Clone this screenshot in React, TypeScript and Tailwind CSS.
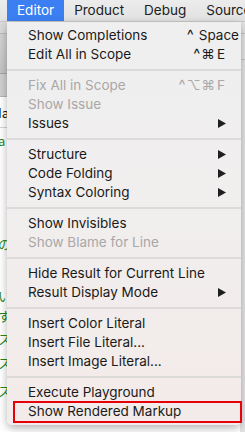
import React from 'react';

type Entry =
  | { kind: 'sep' }
  | { kind: 'item'; label: string; disabled?: boolean; sub?: boolean; keys?: React.ReactNode; pr?: string };

const FONT = { fontFamily: 'Inter, "Liberation Sans", "DejaVu Sans", sans-serif' };

const MENU: Entry[] = [
  {
    kind: 'item',
    label: 'Show Completions',
    pr: 'pr-[2px]',
    keys: (
      <>
        <span className="text-[15px]">^</span>
        <span className="ml-[5px]">Space</span>
      </>
    ),
  },
  {
    kind: 'item',
    label: 'Edit All in Scope',
    pr: 'pr-[16px]',
    keys: (
      <>
        <span className="text-[15px]">^</span>
        <span className="ml-[1px]">⌘</span>
        <span className="ml-[2px]">E</span>
      </>
    ),
  },
  { kind: 'sep' },
  {
    kind: 'item',
    label: 'Fix All in Scope',
    disabled: true,
    pr: 'pr-[16px]',
    keys: (
      <>
        <span className="text-[15px]">^</span>
        <span className="ml-[1px]">⌥</span>
        <span className="ml-[1px]">⌘</span>
        <span className="ml-[2px]">F</span>
      </>
    ),
  },
  { kind: 'item', label: 'Show Issue', disabled: true },
  { kind: 'item', label: 'Issues', sub: true },
  { kind: 'sep' },
  { kind: 'item', label: 'Structure', sub: true },
  { kind: 'item', label: 'Code Folding', sub: true },
  { kind: 'item', label: 'Syntax Coloring', sub: true },
  { kind: 'sep' },
  { kind: 'item', label: 'Show Invisibles' },
  { kind: 'item', label: 'Show Blame for Line', disabled: true },
  { kind: 'sep' },
  { kind: 'item', label: 'Hide Result for Current Line' },
  { kind: 'item', label: 'Result Display Mode', sub: true },
  { kind: 'sep' },
  { kind: 'item', label: 'Insert Color Literal' },
  { kind: 'item', label: 'Insert File Literal...' },
  { kind: 'item', label: 'Insert Image Literal...' },
  { kind: 'sep' },
  { kind: 'item', label: 'Execute Playground' },
  { kind: 'item', label: 'Show Rendered Markup' },
];

// code fragments peeking out to the left of the menu
const CODE_LINES: { h: string; text: string; color: string }[] = [
  { h: 'h-[31px]', text: 'Ia', color: 'text-[#111]' },
  { h: 'h-[24px]', text: 'a', color: 'text-[#1f8a1f]' },
  { h: 'h-[80px]', text: '', color: '' },
  { h: 'h-[22px]', text: 'の', color: 'text-[#1f8a1f]' },
  { h: 'h-[31px]', text: '', color: '' },
  { h: 'h-[20px]', text: 'い', color: 'text-[#1f8a1f]' },
  { h: 'h-[20px]', text: 'す', color: 'text-[#1f8a1f]' },
  { h: 'h-[2px]', text: '', color: '' },
  { h: 'h-[22px]', text: 'ス', color: 'text-[#1f8a1f]' },
  { h: 'h-[2px]', text: '', color: '' },
  { h: 'h-[22px]', text: 'ス', color: 'text-[#1f8a1f]' },
  { h: 'h-[6px]', text: '', color: '' },
  { h: 'h-[22px]', text: 'ス', color: 'text-[#1f8a1f]' },
];

function SubArrow() {
  return (
    <svg width="8" height="9" viewBox="0 0 8 9" className="block">
      <polygon points="0,0 8,4.5 0,9" fill="#1f1f1f" />
    </svg>
  );
}

export default function App() {
  return (
    <div className="relative h-[432px] w-[245px] overflow-hidden bg-white" style={FONT}>
      {/* menu bar */}
      <div className="flex h-[22px] items-stretch border-b border-[#c9c9c9] bg-gradient-to-b from-[#ececec] to-[#e1e1e1] pl-[7px] text-[13.5px] text-[#202020]">
        <div className="flex items-center bg-[#3b7ff2] px-[10px] text-white">Editor</div>
        <div className="flex items-center px-[10px]">Product</div>
        <div className="flex items-center px-[10px]">Debug</div>
        <div className="flex items-center whitespace-nowrap px-[10px]">Source</div>
      </div>

      {/* window behind */}
      <div className="flex h-[410px]">
        <div className="flex flex-1 flex-col">
          <div className="h-[12px] border-b border-[#b9b9b9] bg-[#dadada]" />
          <div className="h-[40px] border-b border-[#a8a8a8] bg-gradient-to-b from-[#d2d2d2] to-[#c3c3c3]" />
          <div className="h-[23px] border-b border-[#b4b4b4] bg-[#cfcfcf]" />
          <div className="flex flex-col bg-white text-[13px] leading-none">
            {CODE_LINES.map((l, i) => (
              <div
                key={i}
                className={`${l.h} flex items-center ${i === 0 ? 'border-b border-[#d5d5d5]' : ''}`}
                style={{ fontFamily: '"Noto Sans CJK JP", "DejaVu Sans", sans-serif' }}
              >
                <span className={`-ml-[2px] ${l.color}`}>{l.text}</span>
              </div>
            ))}
          </div>
        </div>
        <div className="flex w-[5px] flex-col bg-[#e4e4e4]">
          <div className="h-[12px] border-b border-[#c4c4c4]" />
          <div className="h-[26px] border-b border-[#c4c4c4]" />
        </div>
      </div>

      {/* dropdown menu */}
      <div className="absolute left-[7px] top-[22px] h-[403px] w-[234px] rounded-b-[5px] bg-gradient-to-b from-[#efefef] via-[#f1eeee] to-[#f3ebe9] pt-[4px] text-[13.5px] shadow-[0_3px_8px_rgba(0,0,0,0.3)]">
        {MENU.map((e, i) =>
          e.kind === 'sep' ? (
            <div key={i} className="flex h-[12px] items-center">
              <div className="h-[2px] w-full bg-[#dddada]" />
            </div>
          ) : (
            <div
              key={i}
              className={`flex h-[19px] items-center justify-between pl-[21px] ${
                e.disabled ? 'text-[#a9a7a7]' : 'text-[#1a1a1a]'
              } ${e.keys ? e.pr : 'pr-[15px]'}`}
            >
              <span className="whitespace-nowrap">{e.label}</span>
              {e.keys && <span className="flex items-center whitespace-nowrap">{e.keys}</span>}
              {e.sub && <SubArrow />}
            </div>
          ),
        )}
      </div>

      {/* highlight box */}
      <div className="absolute left-[13px] top-[401px] h-[22px] w-[229px] border-2 border-[#e8000b]" />
    </div>
  );
}
